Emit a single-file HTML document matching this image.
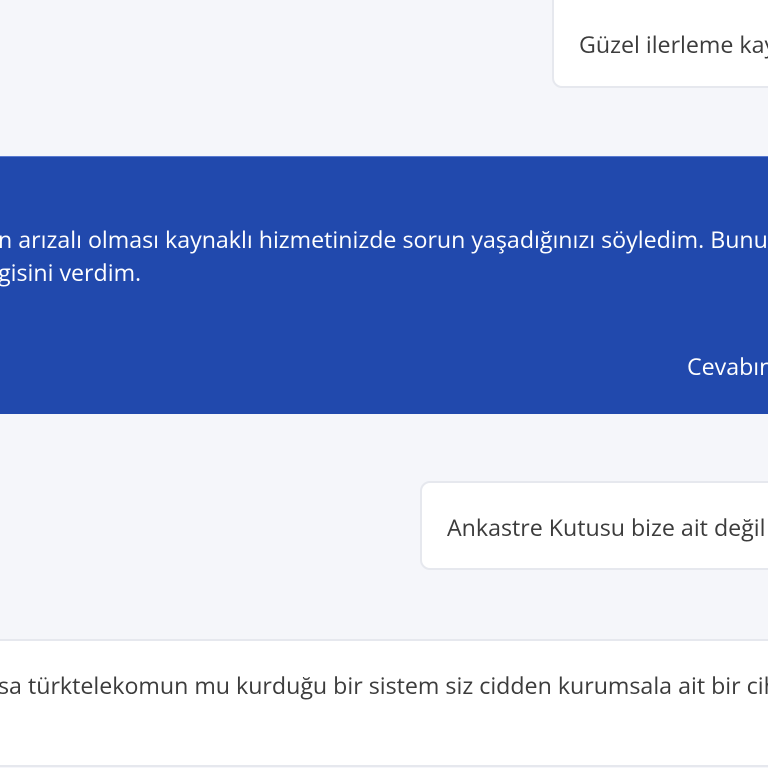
<!DOCTYPE html>
<html><head><meta charset="utf-8"><style>
html,body{margin:0;padding:0;width:768px;height:768px;overflow:hidden;background:#f5f6fa;font-family:"Open Sans","Liberation Sans",sans-serif;}
.wrap{position:relative;width:768px;height:768px;overflow:hidden;}
.t{position:absolute;white-space:nowrap;font-size:23.2px;line-height:33px;}
.box{position:absolute;background:#fff;border:2px solid #e6e8ee;border-radius:10px;box-sizing:border-box;}
</style></head><body><div class="wrap">
<div class="box" style="left:552px;top:-12px;width:240px;height:100px;"></div>
<div class="t" style="left:579px;top:28px;color:#3c3c3c;">Güzel ilerleme kaydediyoruz</div>
<div style="position:absolute;left:0;top:156px;width:768px;height:257px;background:#2149ad;border-top:1px solid #5a7bd0;"></div>
<div class="t" style="left:-2px;top:223px;color:#fff;">n arızalı olması kaynaklı hizmetinizde sorun yaşadığınızı söyledim. Bunun</div>
<div class="t" style="left:-2px;top:256px;color:#fff;">gisini verdim.</div>
<div class="t" style="left:687px;top:350px;color:#fff;">Cevabınız</div>
<div class="box" style="left:420px;top:481px;width:380px;height:89px;"></div>
<div class="t" style="left:447px;top:511px;color:#3c3c3c;">Ankastre Kutusu bize ait değil</div>
<div style="position:absolute;left:0;top:639px;width:768px;height:124px;background:#fff;border-top:2px solid #e6e8ee;border-bottom:2px solid #e6e8ee;"></div>
<div class="t" style="left:-2px;top:669px;color:#3c3c3c;">sa türktelekomun mu kurduğu bir sistem siz cidden kurumsala ait bir cihaz</div>
</div></body></html>
